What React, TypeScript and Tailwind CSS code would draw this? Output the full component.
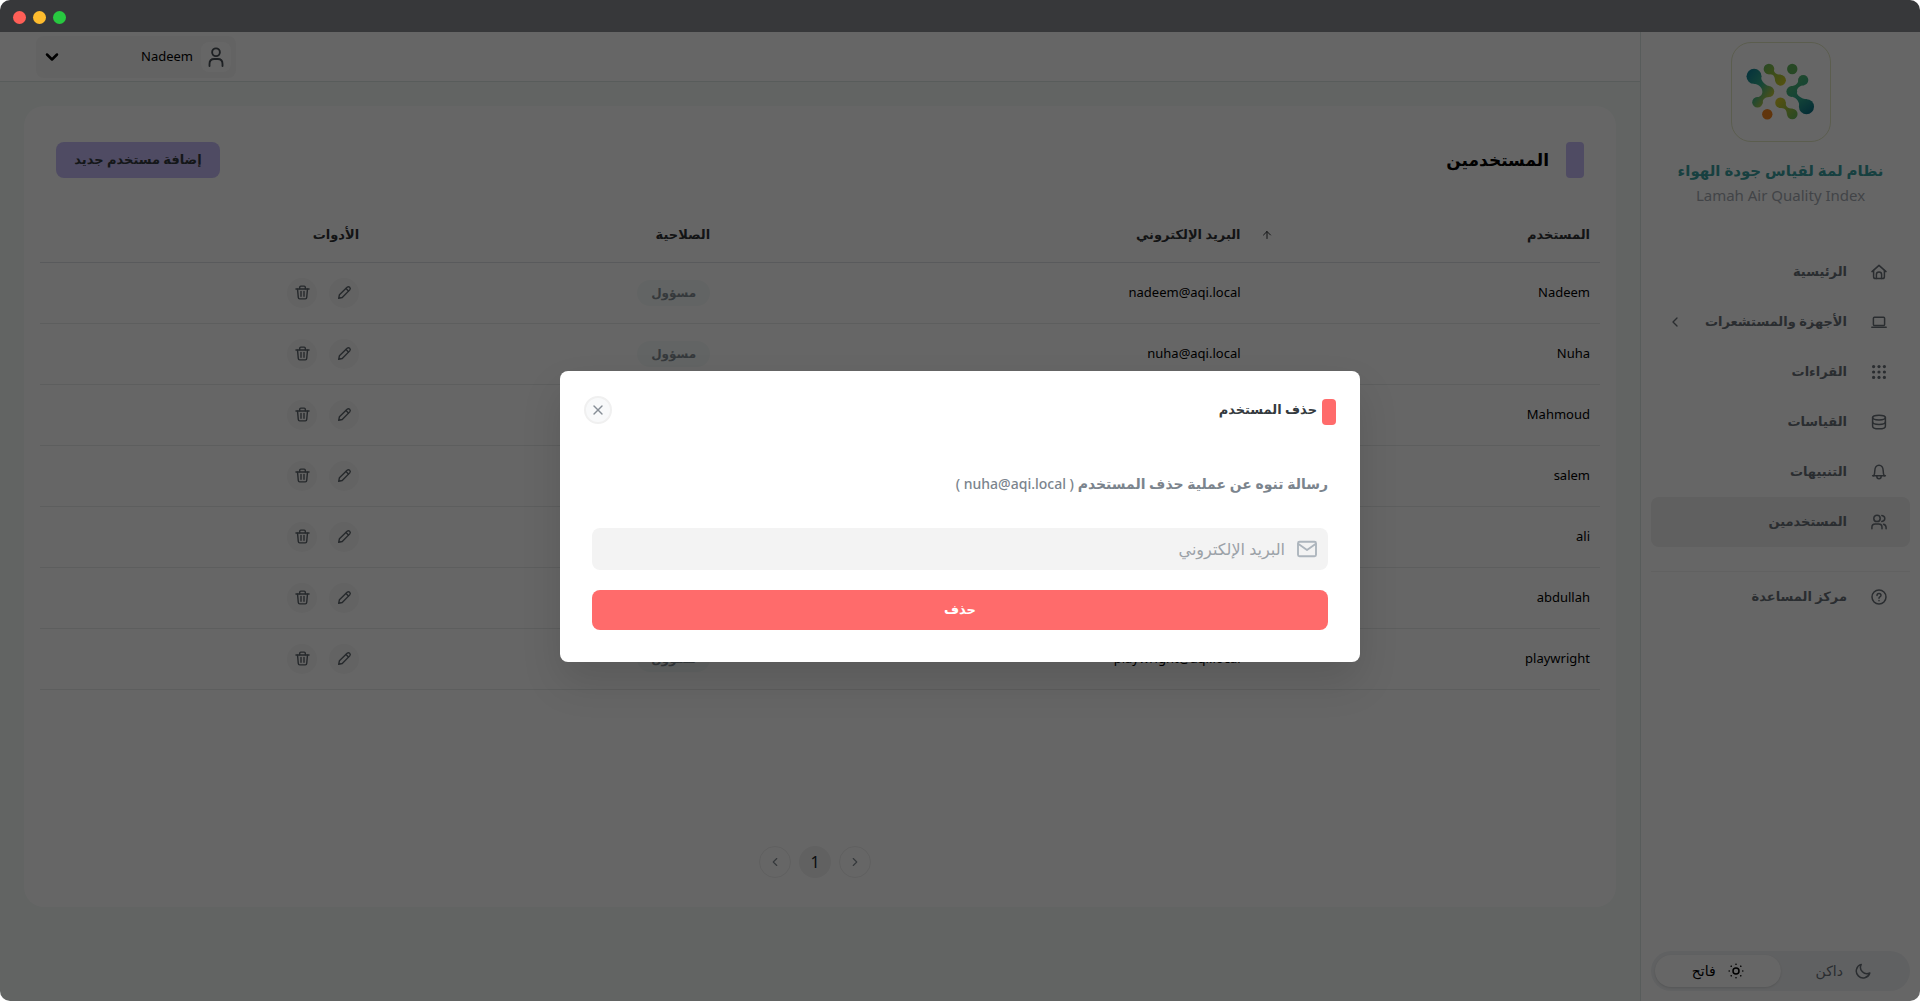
import React from 'react';
import { ChevronDown, ChevronLeft, ChevronRight, ArrowUp, X } from 'lucide-react';

type IconProps = {
  name: string;
  className?: string;
};

const iconPaths: Record<string, React.ReactNode> = {
  home: (
    <>
      <path d="M1 7.6 8 1.4 15 7.6" />
      <path d="M2.6 6.6V12.8Q2.6 14.6 4.4 14.6H11.6Q13.4 14.6 13.4 12.8V6.6" />
      <path d="M5.4 14.6V10.4Q5.4 8 8 8T10.6 10.4V14.6" />
    </>
  ),
  laptop: (
    <>
      <rect x="2.4" y="3.2" width="11.2" height="8.2" rx="1" />
      <path d="M.8 13.2H15.2" />
    </>
  ),
  database: (
    <>
      <ellipse cx="8" cy="3.6" rx="6.4" ry="2.4" />
      <path d="M1.6 3.6V12.2C1.6 13.6 4 14.8 8 14.8S14.4 13.6 14.4 12.2V3.6" />
      <path d="M1.6 8C1.6 9.2 4 10.4 8 10.4S14.4 9.2 14.4 8" />
    </>
  ),
  bell: (
    <>
      <path d="M1.6 11.8H14.4" />
      <path d="M2.6 11.8C3.6 10.6 3.8 9 3.8 6.8C3.8 3.6 5.6 1.2 8 1.2S12.2 3.6 12.2 6.8C12.2 9 12.4 10.6 13.4 11.8" />
      <path d="M5.8 12C5.8 13.8 6.6 14.8 8 14.8S10.2 13.8 10.2 12" />
    </>
  ),
  users: (
    <>
      <circle cx="6" cy="4.4" r="3.2" />
      <path d="M.9 14.8V13.4Q.9 10 4.2 10H7.8Q11 10 11 13.4V14.8" />
      <path d="M10.8 1.4C14.8 2 14.8 6.8 10.8 7.4" />
      <path d="M12.6 10.2Q15.1 11 15.1 13.6V14.8" />
    </>
  ),
  help: (
    <>
      <circle cx="8" cy="8" r="7" />
      <path d="M6 6.4Q6 4.4 8 4.4T10 6.3Q10 7.3 8.9 7.9Q8 8.4 8 9.2" />
      <path d="M8 11.4V11.7" />
    </>
  ),
  user: (
    <>
      <circle cx="8" cy="4.2" r="3.1" />
      <path d="M2.8 15.2V13.6Q2.8 9.6 6.6 9.6H9.4Q13.2 9.6 13.2 13.6V15.2" />
    </>
  ),
  pencil: (
    <>
      <path d="M1.8 14.2 2.6 10.4 10.8 2.4Q12.2 1.2 13.5 2.5T13.6 5.2L5.6 13.4Z" />
      <path d="M9.6 3.8 12.2 6.4" />
    </>
  ),
  trash: (
    <>
      <path d="M1 4.2H15" />
      <path d="M2.7 4.4 3.5 13.2Q3.6 14.8 5 14.8H11Q12.4 14.8 12.5 13.2L13.3 4.4" />
      <path d="M5 4V2.4Q5 1.2 6.2 1.2H9.8Q11 1.2 11 2.4V4" />
      <path d="M6.4 7V12" />
      <path d="M9.6 7V12" />
    </>
  ),
  mail: (
    <>
      <rect x=".8" y="2.2" width="14.4" height="11.6" rx="1.2" />
      <path d="M1.2 4 8 8.8 14.8 4" />
    </>
  ),
  moon: <path d="M6.2 1.4A6.9 6.9 0 1 0 14.8 10A6.4 6.4 0 0 1 6.2 1.4Z" />,
};

const dots = [2.6, 8, 13.4];

const Icon = ({ name, className = 'size-4' }: IconProps) => {
  if (name === 'grid') {
    return (
      <svg viewBox="0 0 16 16" className={className} fill="currentColor">
        {dots.map((y) => dots.map((x) => <circle key={`${x}-${y}`} cx={x} cy={y} r="1.6" />))}
      </svg>
    );
  }
  if (name === 'sun') {
    return (
      <svg viewBox="0 0 16 16" className={className} fill="currentColor">
        <circle cx="8" cy="8" r="3" fill="none" stroke="currentColor" strokeWidth="1.5" />
        {[0, 45, 90, 135, 180, 225, 270, 315].map((a) => (
          <circle key={a} cx="8" cy="1.2" r=".8" transform={`rotate(${a} 8 8)`} />
        ))}
      </svg>
    );
  }
  return (
    <svg
      viewBox="0 0 16 16"
      className={className}
      fill="none"
      stroke="currentColor"
      strokeWidth="1.5"
      strokeLinecap="round"
      strokeLinejoin="round"
    >
      {iconPaths[name]}
    </svg>
  );
};

const Logo = () => (
  <svg viewBox="0 0 100 100" className="size-full">
    <defs>
      <linearGradient id="leftArm" x1="15" y1="30" x2="44" y2="50" gradientUnits="userSpaceOnUse">
        <stop offset="0" stopColor="#0f7f97" />
        <stop offset=".55" stopColor="#38b08b" />
        <stop offset="1" stopColor="#c3c93c" />
      </linearGradient>
      <linearGradient id="topArm" x1="34" y1="22" x2="54" y2="42" gradientUnits="userSpaceOnUse">
        <stop offset="0" stopColor="#69b85a" />
        <stop offset="1" stopColor="#d3cb24" />
      </linearGradient>
      <linearGradient id="bottomArm" x1="46" y1="58" x2="66" y2="78" gradientUnits="userSpaceOnUse">
        <stop offset="0" stopColor="#d8c92a" />
        <stop offset="1" stopColor="#62b65a" />
      </linearGradient>
      <linearGradient id="rightArm" x1="58" y1="42" x2="80" y2="72" gradientUnits="userSpaceOnUse">
        <stop offset="0" stopColor="#4fb573" />
        <stop offset=".5" stopColor="#2fa98d" />
        <stop offset="1" stopColor="#0b6e85" />
      </linearGradient>
    </defs>
    <g fill="url(#leftArm)">
      <circle cx="22.5" cy="34" r="7.7" />
      <circle cx="37.5" cy="49.5" r="5.6" />
      <circle cx="26" cy="60.5" r="5.4" />
      <path d="M29 30C29 38 32 42 38 44L38 55C33 55 31 58 31 62L23 56C28 56 31 53 31 50C31 45 27 42 22 41.5Z" />
    </g>
    <g fill="url(#topArm)">
      <circle cx="37.7" cy="26.5" r="5.4" />
      <circle cx="49.5" cy="38" r="5.5" />
      <path d="M43 26C42 30 45 32 50 32.5L44 39C44 34 42 31 37 32Z" />
    </g>
    <circle cx="61.5" cy="26.5" r="5.3" fill="#62b35d" />
    <g fill="url(#bottomArm)">
      <circle cx="49.5" cy="61" r="5.4" />
      <circle cx="61.5" cy="72.5" r="5.4" />
      <path d="M55 60C54 65 57 67 62 67L56 73C56 69 54 66 49 66.5Z" />
    </g>
    <circle cx="36" cy="72.7" r="5.3" fill="#f38420" />
    <g fill="url(#rightArm)">
      <circle cx="72.7" cy="37.8" r="5.2" />
      <circle cx="61" cy="49.5" r="5.5" />
      <circle cx="76" cy="65" r="7.7" />
      <path d="M68 36C68 41 65 44 60 44L62 55C66 56 69 60 69 66L77 57.5C70 57 66 53 66 50C66 46 69 43 74 43Z" />
    </g>
  </svg>
);

const menuItems = [
  { title: 'الرئيسية', icon: 'home' },
  { title: 'الأجهزة والمستشعرات', icon: 'laptop', expandable: true },
  { title: 'القراءات', icon: 'grid' },
  { title: 'القياسات', icon: 'database' },
  { title: 'التنبيهات', icon: 'bell' },
  { title: 'المستخدمين', icon: 'users', active: true },
];

const users = [
  { name: 'Nadeem', email: 'nadeem@aqi.local' },
  { name: 'Nuha', email: 'nuha@aqi.local' },
  { name: 'Mahmoud', email: 'mahmoud@aqi.local' },
  { name: 'salem', email: 'salem@aqi.local' },
  { name: 'ali', email: 'ali@aqi.local' },
  { name: 'abdullah', email: 'abdullah@aqi.local' },
  { name: 'playwright', email: 'playwright@aqi.local' },
];

const TitleBar = () => (
  <div className="flex h-8 shrink-0 items-center gap-[7px] bg-[#37383a] px-[13px] pt-[2px]" dir="ltr">
    <span className="size-[13px] rounded-full bg-[#ff5f57]"></span>
    <span className="size-[13px] rounded-full bg-[#febc2e]"></span>
    <span className="size-[13px] rounded-full bg-[#28c840]"></span>
  </div>
);

const Sidebar = () => (
  <aside className="flex w-[280px] shrink-0 flex-col border-l border-[#dbe5e4] px-[10px] pt-[10px] pb-[10px]">
    <div className="mx-auto size-[100px] rounded-[20px] border border-[#e3e8c4]">
      <Logo />
    </div>
    <h2 className="mt-[14px] text-center text-[15px] leading-7 font-bold text-[#3aa0a0]">نظام لمة لقياس جودة الهواء</h2>
    <p className="text-center text-[15px] leading-[22px] text-[#a5abb3]">Lamah Air Quality Index</p>

    <nav className="mt-[41px] text-[#697078]">
      {menuItems.map((item) => (
        <a
          key={item.title}
          href="#"
          className={`flex h-[50px] items-center rounded-lg px-[23px] ${item.active ? 'bg-[#efefef]' : ''}`}
        >
          <Icon name={item.icon} />
          <span className="mr-6 text-[13px] font-bold whitespace-nowrap">{item.title}</span>
          {item.expandable && <ChevronLeft className="mr-auto -ml-[7px] size-4" strokeWidth={2} />}
        </a>
      ))}
      <div className="mt-6 border-t border-[#f3f3f3]">
        <a href="#" className="flex h-[50px] items-center px-[23px]">
          <Icon name="help" />
          <span className="mr-6 text-[13px] font-bold">مركز المساعدة</span>
        </a>
      </div>
    </nav>

    <div className="mt-auto flex h-10 rounded-full bg-[#f1f3f5] p-1 text-sm">
      <button type="button" className="flex flex-1 items-center justify-center gap-3 text-[#697078]">
        <Icon name="moon" />
        داكن
      </button>
      <button type="button" className="flex flex-1 items-center justify-center gap-3 rounded-full bg-white text-black shadow">
        <Icon name="sun" />
        فاتح
      </button>
    </div>
  </aside>
);

const UsersTable = () => (
  <table className="mt-[30px] w-full table-fixed border-collapse text-right text-[13px]">
    <thead>
      <tr className="h-[54px] border-b border-[#dee2e6] text-[#303336]">
        <th className="w-[22.4%] px-[10px]">
          <div className="flex items-center justify-between">
            المستخدم
            <ArrowUp className="size-3" strokeWidth={2} />
          </div>
        </th>
        <th className="w-[34%] px-[10px]">البريد الإلكتروني</th>
        <th className="w-[22.5%] px-[10px]">الصلاحية</th>
        <th className="px-[10px]">الأدوات</th>
      </tr>
    </thead>
    <tbody>
      {users.map((user) => (
        <tr key={user.name} className="h-[61px] border-b border-[#e9eaec]">
          <td className="px-[10px]">{user.name}</td>
          <td className="px-[10px]">{user.email}</td>
          <td className="px-[10px]">
            <span className="inline-flex h-[26px] w-[73px] items-center justify-center rounded-full bg-[#f6fbf9] text-xs font-bold text-[#868e96]">
              مسؤول
            </span>
          </td>
          <td className="px-[10px]">
            <div className="flex gap-3 text-[#5f676e]">
              <button type="button" aria-label="تعديل" className="flex size-[30px] items-center justify-center rounded-full bg-[#f7f7f7]">
                <Icon name="pencil" className="size-[15px]" />
              </button>
              <button type="button" aria-label="حذف" className="flex size-[30px] items-center justify-center rounded-full bg-[#f7f7f7]">
                <Icon name="trash" className="size-[15px]" />
              </button>
            </div>
          </td>
        </tr>
      ))}
    </tbody>
  </table>
);

const Pagination = () => (
  <div className="mt-auto mb-[29px] flex justify-center gap-2 text-[#868e96]" dir="ltr">
    <button type="button" aria-label="السابق" className="flex size-8 items-center justify-center rounded-full border border-[#efefef]">
      <ChevronLeft className="size-[14px]" />
    </button>
    <button type="button" className="size-8 rounded-full bg-[#f2f2f2] text-base text-[#212529]">1</button>
    <button type="button" aria-label="التالي" className="mr-[10px] flex size-8 items-center justify-center rounded-full border border-[#efefef]">
      <ChevronRight className="size-[14px]" />
    </button>
  </div>
);

const DeleteDialog = () => (
  <div
    role="dialog"
    aria-labelledby="delete-title"
    className="w-full max-w-[800px] rounded-lg bg-white pt-[25px] pb-8 shadow-[0_20px_40px_rgba(0,0,0,0.12)]"
  >
    <div className="flex h-7 items-center justify-between px-6">
      <div className="flex gap-[5px]">
        <span className="mt-1 h-[26px] w-[14px] rounded bg-[#ff6b6b]"></span>
        <h3 id="delete-title" className="text-[13px] leading-7 font-bold text-[#343a40]">حذف المستخدم</h3>
      </div>
      <button type="button" aria-label="إغلاق" className="flex size-7 items-center justify-center rounded-full border-2 border-[#f0f0f0] bg-[#f8f9fa] text-[#868e96]">
        <X className="size-4" strokeWidth={2} />
      </button>
    </div>
    <form className="px-8 pt-[46px]">
      <p className="text-sm leading-7 font-semibold text-[#7b848d]">
        رسالة تنوه عن عملية حذف المستخدم <span className="font-medium">( nuha@aqi.local )</span>
      </p>
      <label className="mt-[30px] flex h-[42px] items-center gap-3 rounded-lg bg-[#f3f3f3] px-[11px] text-[#adb5bd]">
        <Icon name="mail" className="size-5" />
        <input
          type="email"
          aria-label="البريد الإلكتروني"
          placeholder="البريد الإلكتروني"
          className="min-w-0 flex-1 bg-transparent text-base outline-none placeholder:text-[#9ba1a7]"
        />
      </label>
      <button type="button" className="mt-5 h-10 w-full rounded-lg bg-[#ff6b6b] text-[13px] font-bold text-white">
        حذف
      </button>
    </form>
  </div>
);

const App = () => {
  return (
    <div
      dir="rtl"
      className="flex min-h-screen flex-col overflow-hidden rounded-[10px] bg-white font-['Noto_Sans','DejaVu_Sans',sans-serif] text-black"
    >
      <TitleBar />
      <div className="relative flex flex-1">
        <Sidebar />
        <div className="flex min-w-0 flex-1 flex-col bg-[#f4faf7]">
          <header className="flex h-[50px] shrink-0 items-center justify-end border-b border-[#dbe5e4] bg-white px-9">
            <button type="button" className="flex h-[42px] w-[200px] items-center rounded-lg bg-[#f7f7f7] px-[5px] text-[13px]">
              <span className="flex size-[30px] items-center justify-center rounded-lg bg-white text-[#495057]">
                <Icon name="user" className="size-5" />
              </span>
              <span className="mr-2">Nadeem</span>
              <ChevronDown className="mr-auto ml-[1px] size-5" strokeWidth={3} />
            </button>
          </header>
          <main className="mx-6 mt-6 mb-[94px] flex flex-1 flex-col rounded-[20px] bg-white px-4 pt-9">
            <div className="flex items-center justify-between px-4">
              <div className="flex items-center gap-[17px]">
                <span className="h-9 w-[18px] rounded bg-[#c5bcf7]"></span>
                <h1 className="text-[17px] font-bold">المستخدمين</h1>
              </div>
              <button type="button" className="h-9 w-[164px] rounded-lg bg-[#c5bcf7] text-[13px] font-bold whitespace-nowrap text-[#343a40]">
                إضافة مستخدم جديد
              </button>
            </div>
            <UsersTable />
            <Pagination />
          </main>
        </div>
        <div className="absolute inset-0 flex items-center justify-center bg-black/60">
          <DeleteDialog />
        </div>
      </div>
    </div>
  );
};

export default App;
